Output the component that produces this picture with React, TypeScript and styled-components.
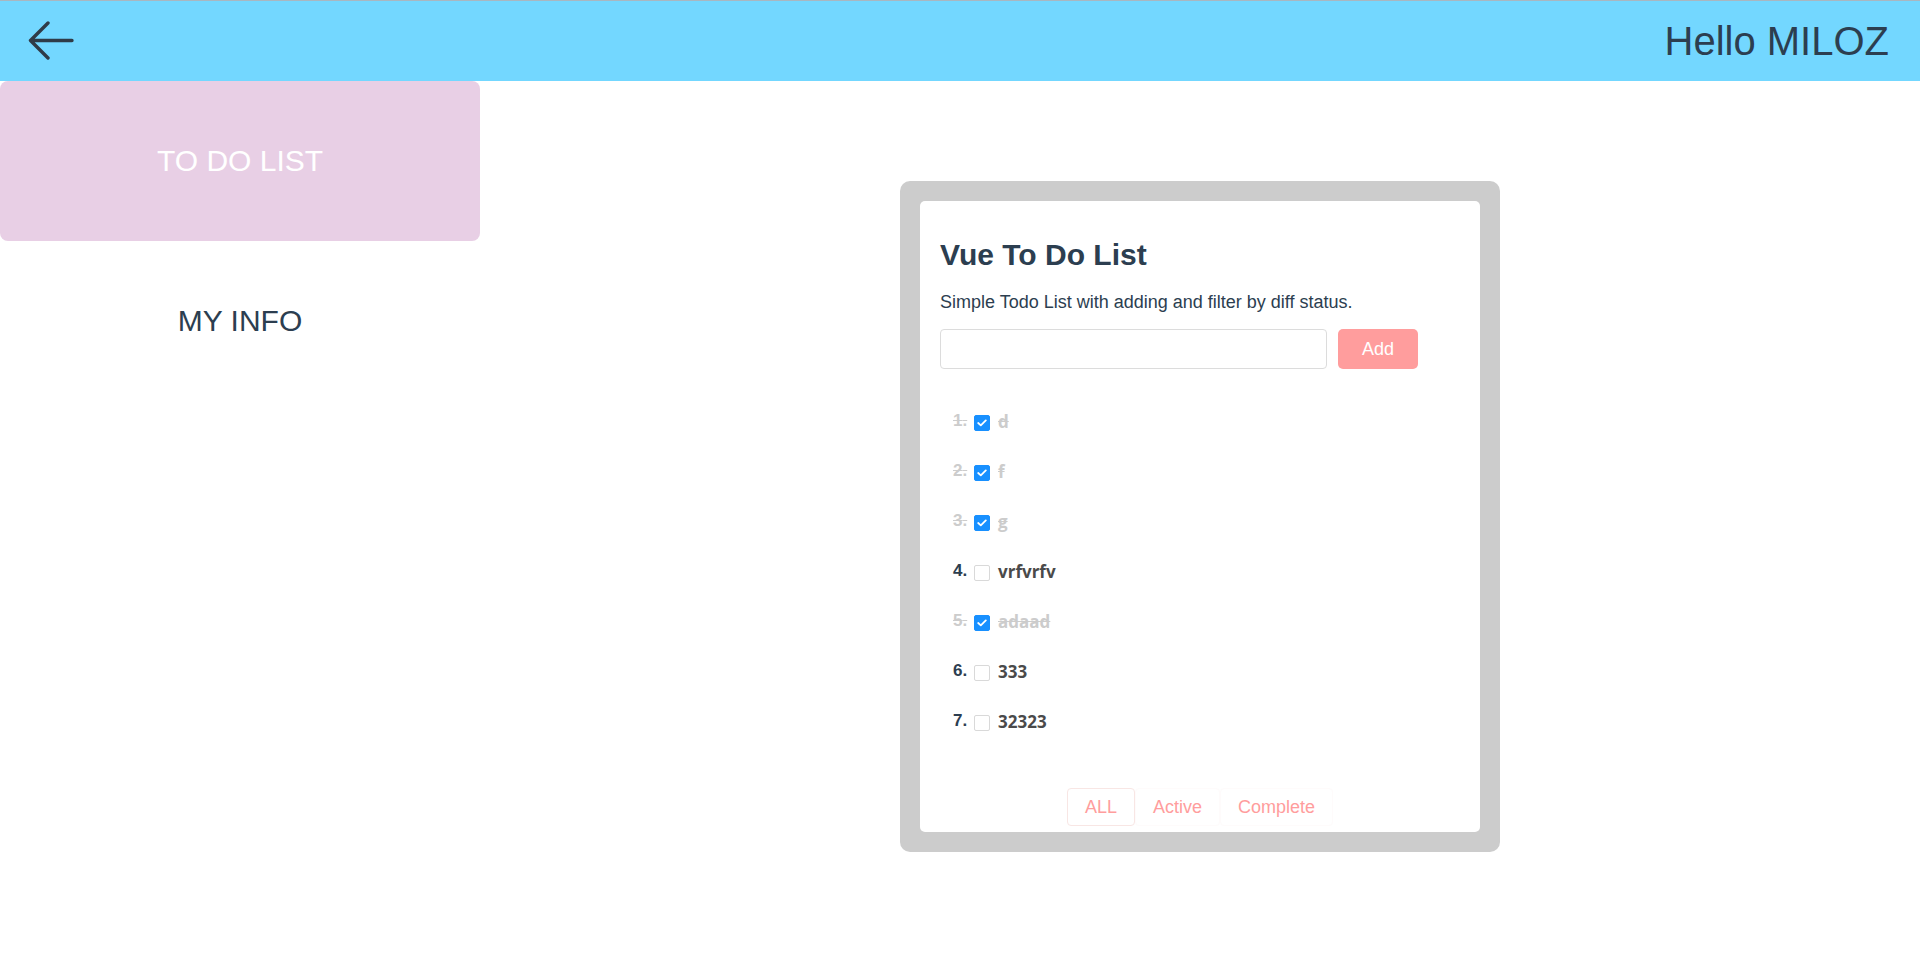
import React from "react";
import styled, { createGlobalStyle } from "styled-components";

const Global = createGlobalStyle`
  html, body { margin: 0; padding: 0; background: #fff; }
  body { font-family: "Liberation Sans", Arial, sans-serif; color: #2c3e50; }
  * { box-sizing: border-box; }
`;

const Page = styled.div`
  display: flex;
  flex-direction: column;
  min-height: 967px;
`;

const Header = styled.header`
  height: 81px;
  border-top: 1px solid #a9b6c0;
  background: #73d7ff;
  display: flex;
  align-items: center;
  justify-content: space-between;
  padding: 0 31px 0 27px;
`;

const BackButton = styled.button`
  border: none;
  background: transparent;
  padding: 0;
  width: 48px;
  height: 40px;
  display: flex;
  align-items: center;
  cursor: pointer;
`;

const Greeting = styled.div`
  font-size: 40px;
  color: #2c3e50;
  line-height: 1;
`;

const Body = styled.div`
  display: flex;
  flex: 1;
`;

const Sidebar = styled.nav`
  width: 480px;
  display: flex;
  flex-direction: column;
`;

const NavItem = styled.div<{ $active?: boolean }>`
  height: 160px;
  display: flex;
  align-items: center;
  justify-content: center;
  font-size: 30px;
  border-radius: 8px;
  background: ${(p) => (p.$active ? "#e8cfe5" : "transparent")};
  color: ${(p) => (p.$active ? "#ffffff" : "#2c3e50")};
  cursor: pointer;
`;

const Main = styled.main`
  flex: 1;
  display: flex;
  justify-content: center;
  padding-top: 100px;
`;

const Frame = styled.div`
  width: 600px;
  height: 671px;
  background: #cccccc;
  border-radius: 10px;
  padding: 20px;
`;

const Card = styled.div`
  height: 100%;
  background: #fff;
  border-radius: 5px;
  padding: 20px 20px 6px;
  display: flex;
  flex-direction: column;
`;

const Title = styled.h1`
  margin: 17px 0 0;
  font-size: 30px;
  line-height: 34px;
  font-weight: bold;
  color: #2c3e50;
`;

const Subtitle = styled.p`
  margin: 20px 0 0;
  font-size: 18px;
  line-height: 21px;
  color: #2c3e50;
`;

const AddRow = styled.div`
  display: flex;
  gap: 11px;
  margin-top: 16px;
`;

const TextInput = styled.input`
  width: 387px;
  height: 40px;
  border: 1px solid #dcdcdc;
  border-radius: 4px;
  padding: 0 10px;
  font-size: 16px;
  outline: none;
`;

const AddButton = styled.button`
  width: 80px;
  height: 40px;
  border: none;
  border-radius: 5px;
  background: #ff9d9d;
  color: #fff;
  font-family: "Liberation Sans", Arial, sans-serif;
  font-size: 18px;
  cursor: pointer;
`;

const List = styled.ul`
  list-style: none;
  margin: 40px 0 0;
  padding: 0 0 0 13px;
  display: flex;
  flex-direction: column;
  gap: 26px;
`;

const Item = styled.li<{ $done: boolean }>`
  display: flex;
  align-items: center;
  height: 24px;
  text-decoration: ${(p) => (p.$done ? "line-through" : "none")};
  color: ${(p) => (p.$done ? "#cccccc" : "#2c3e50")};
`;

const Num = styled.span`
  font-size: 17px;
  font-weight: bold;
  width: 21px;
`;

const Check = styled.span<{ $checked: boolean }>`
  width: 16px;
  height: 16px;
  border-radius: 2px;
  border: 1px solid ${(p) => (p.$checked ? "#1890ff" : "#d9d9d9")};
  background: ${(p) => (p.$checked ? "#1890ff" : "#fff")};
  display: flex;
  align-items: center;
  justify-content: center;
  margin-top: 3px;
  flex-shrink: 0;
`;

const Label = styled.span<{ $done: boolean }>`
  margin-left: 8px;
  font-family: "Open Sans", "Noto Sans", sans-serif;
  font-weight: bold;
  font-size: 17px;
  color: ${(p) => (p.$done ? "#cccccc" : "#4a4a4a")};
`;

const Filters = styled.div`
  margin-top: auto;
  display: flex;
  justify-content: center;
`;

const FilterButton = styled.button<{ $active?: boolean }>`
  height: 38px;
  padding: 0 17px;
  border: 1px solid ${(p) => (p.$active ? "#f8e6e4" : "#fefbfb")};
  border-radius: 4px;
  background: #fff;
  color: #ff9d9d;
  font-family: "Liberation Sans", Arial, sans-serif;
  font-size: 18px;
  cursor: pointer;
`;

const todos = [
  { text: "d", done: true },
  { text: "f", done: true },
  { text: "g", done: true },
  { text: "vrfvrfv", done: false },
  { text: "adaad", done: true },
  { text: "333", done: false },
  { text: "32323", done: false },
];

export default function App() {
  return (
    <>
      <Global />
      <Page>
        <Header>
          <BackButton aria-label="back">
            <svg width="48" height="40" viewBox="0 0 48 40" fill="none">
              <path
                d="M45 19.5 H3.5 M3.5 19.5 L21 2 M3.5 19.5 L21 37"
                stroke="#2f3b48"
                strokeWidth="3.4"
                strokeLinecap="round"
                strokeLinejoin="round"
              />
            </svg>
          </BackButton>
          <Greeting>Hello MILOZ</Greeting>
        </Header>
        <Body>
          <Sidebar>
            <NavItem $active>TO DO LIST</NavItem>
            <NavItem>MY INFO</NavItem>
          </Sidebar>
          <Main>
            <Frame>
              <Card>
                <Title>Vue To Do List</Title>
                <Subtitle>Simple Todo List with adding and filter by diff status.</Subtitle>
                <AddRow>
                  <TextInput type="text" />
                  <AddButton>Add</AddButton>
                </AddRow>
                <List>
                  {todos.map((t, i) => (
                    <Item key={i} $done={t.done}>
                      <Num>{i + 1}.</Num>
                      <Check $checked={t.done}>
                        {t.done && (
                          <svg width="10" height="8" viewBox="0 0 10 8">
                            <path
                              d="M1.2 4 L3.8 6.4 L8.8 1.4"
                              stroke="#fff"
                              strokeWidth="1.8"
                              fill="none"
                              strokeLinecap="round"
                              strokeLinejoin="round"
                            />
                          </svg>
                        )}
                      </Check>
                      <Label $done={t.done}>{t.text}</Label>
                    </Item>
                  ))}
                </List>
                <Filters>
                  <FilterButton $active>ALL</FilterButton>
                  <FilterButton>Active</FilterButton>
                  <FilterButton>Complete</FilterButton>
                </Filters>
              </Card>
            </Frame>
          </Main>
        </Body>
      </Page>
    </>
  );
}
